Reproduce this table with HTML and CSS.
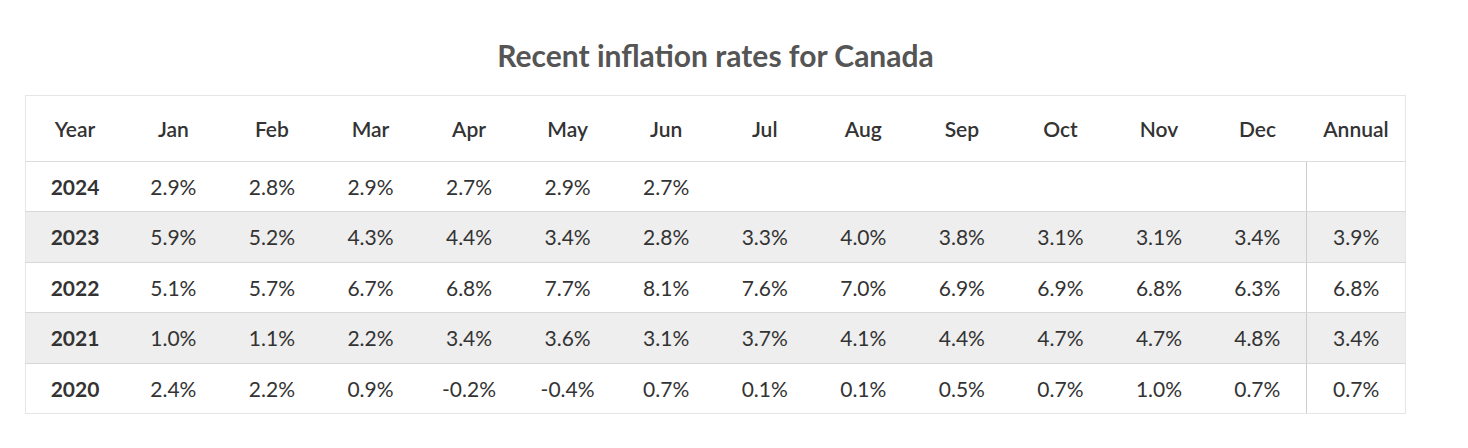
FILE: index.html
```html
<!DOCTYPE html>
<html lang="en">
<head>
<meta charset="utf-8">
<title>Recent inflation rates for Canada</title>
<link rel="stylesheet" href="styles.css">
</head>
<body>
<div class="wrap">
  <h2 class="title">Recent inflation rates for Canada</h2>
  <table class="rates">
    <thead>
      <tr>
        <th>Year</th><th>Jan</th><th>Feb</th><th>Mar</th><th>Apr</th><th>May</th><th>Jun</th><th>Jul</th><th>Aug</th><th>Sep</th><th>Oct</th><th>Nov</th><th>Dec</th><th class="annual-h">Annual</th>
      </tr>
    </thead>
    <tbody>
      <tr>
        <td class="yr">2024</td><td>2.9%</td><td>2.8%</td><td>2.9%</td><td>2.7%</td><td>2.9%</td><td>2.7%</td><td></td><td></td><td></td><td></td><td></td><td></td><td class="annual"></td>
      </tr>
      <tr class="alt">
        <td class="yr">2023</td><td>5.9%</td><td>5.2%</td><td>4.3%</td><td>4.4%</td><td>3.4%</td><td>2.8%</td><td>3.3%</td><td>4.0%</td><td>3.8%</td><td>3.1%</td><td>3.1%</td><td>3.4%</td><td class="annual">3.9%</td>
      </tr>
      <tr>
        <td class="yr">2022</td><td>5.1%</td><td>5.7%</td><td>6.7%</td><td>6.8%</td><td>7.7%</td><td>8.1%</td><td>7.6%</td><td>7.0%</td><td>6.9%</td><td>6.9%</td><td>6.8%</td><td>6.3%</td><td class="annual">6.8%</td>
      </tr>
      <tr class="alt">
        <td class="yr">2021</td><td>1.0%</td><td>1.1%</td><td>2.2%</td><td>3.4%</td><td>3.6%</td><td>3.1%</td><td>3.7%</td><td>4.1%</td><td>4.4%</td><td>4.7%</td><td>4.7%</td><td>4.8%</td><td class="annual">3.4%</td>
      </tr>
      <tr>
        <td class="yr">2020</td><td>2.4%</td><td>2.2%</td><td>0.9%</td><td>-0.2%</td><td>-0.4%</td><td>0.7%</td><td>0.1%</td><td>0.1%</td><td>0.5%</td><td>0.7%</td><td>1.0%</td><td>0.7%</td><td class="annual">0.7%</td>
      </tr>
    </tbody>
  </table>
</div>
</body>
</html>
```
FILE: styles.css
```css
html, body {
  margin: 0;
  padding: 0;
  background: #fff;
}
body {
  font-family: Lato, "Open Sans", "Liberation Sans", sans-serif;
  color: #333;
}
.wrap {
  width: 1381px;
  margin-left: 25px;
  padding-top: 38px;
}
.title {
  margin: 0 0 23px;
  text-align: center;
  font-size: 30px;
  line-height: 34px;
  font-weight: 700;
  color: #555;
}
.rates {
  width: 1381px;
  border-collapse: collapse;
  table-layout: fixed;
  border: 1px solid #e6e6e6;
  font-size: 21px;
}
.rates th {
  font-weight: 600;
  padding: 21px 0 20px;
  line-height: 24px;
  text-align: center;
  border-bottom: 1px solid #dddddd;
  color: #333;
}
.rates td {
  padding: 13px 0 12.4px;
  line-height: 24px;
  text-align: center;
  border-bottom: 1px solid #d8d8d8;
  color: #333;
}
.rates tbody tr:last-child td {
  border-bottom: 1px solid #e6e6e6;
}
.rates .alt td {
  background: #eeeeee;
}
.rates .yr {
  font-weight: 700;
}
.rates .annual {
  border-left: 1px solid #cccccc;
}
```
